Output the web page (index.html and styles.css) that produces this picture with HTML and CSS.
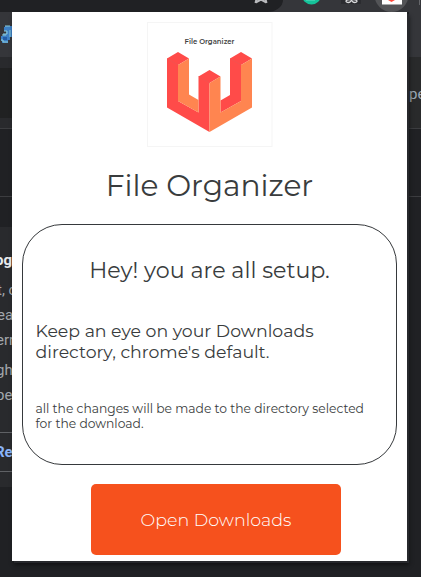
FILE: index.html
```html
<!DOCTYPE html>
<html lang="en">
<head>
<meta charset="utf-8">
<title>File Organizer</title>
<link rel="stylesheet" href="styles.css">
</head>
<body>
<div class="browser">
  <header class="toolbar">
    <div class="omnibox">
      <svg class="star" width="18" height="12" viewBox="0 0 18 12"><path d="M3.500 3 5-3M14.500 3 13-3M3.500 2.500 9-.5 14.500 2.500" fill="none" stroke="#b9babd" stroke-width="2"/></svg>
    </div>
    <svg class="tools" width="138" height="12" viewBox="283 0 138 12">
      <circle cx="311.500" cy="-5" r="9.500" fill="#15c39a"/>
      <path d="M306 0h9" stroke="#65dfc4" stroke-width="1"/>
      <path d="M341 0h20v4h-20z" fill="#2b2c30"/>
      <path d="M350-.5c-5 0-5 3-1.500 3 2 0 2-1 3-2.500 1 1.500 1 2.500 3 2.500 3.500 0 3.500-3-1.500-3" fill="none" stroke="#d7d8da" stroke-width="1.300"/>
      <circle cx="391.500" cy="-5" r="17" fill="#535457"/>
      <path d="M382 0h20v4.500h-20z" fill="#fff"/>
      <path d="M388 0h7l-3.500 2Z" fill="#ff4b3e"/>
      <path d="M419.500 0v5" stroke="#66676b"/>
    </svg>
  </header>
  <aside class="rail left">
    <div class="bookmarks"><svg width="12" height="20" viewBox="0 0 12 20"><path d="M5 1h7v11h-2v3H8v3H2v-2H1v-5h2V9h3V6H4V2h1Z" fill="#3d80c5"/><path d="M5 1h5M4 6h3v3H3M10 5v7M2 10h4M1 15h2v2h5" fill="none" stroke="#8dcbd6"/><path d="M3 12h4v3H3Z" fill="#235da6"/></svg></div>
    <div class="band"></div><div class="hero"></div><div class="strip"></div><div class="gap"></div><div class="gap-end"></div>
    <div class="panel">
      <b>og</b><span>t, c</span><span>ea</span><span class="wide">err</span><span class="wide para">gh</span><span class="wide">pe</span>
      <div class="link">Re</div>
    </div>
  </aside>
  <aside class="rail right">
    <div class="bookmarks"></div><div class="side">pe</div><div class="gap"></div>
  </aside>
</div>
<main class="popup">
  <svg class="logo" width="126" height="126" viewBox="147 22 126 126">
    <rect x="147.500" y="22.500" width="124.500" height="124" fill="#fff" stroke="#f5f5f5"/>
    <text x="184.500" y="44" textLength="50" lengthAdjust="spacingAndGlyphs">File Organizer</text>
    <path fill="#ff4b49" d="M167 58.500 178 52 189 58.500 178 65V101L198.500 112.500V76.500L209.500 70 220.500 76.500 209.500 83V132L167 107.500ZM230 58.500 241 52 252 58.500 241 65V101L220.500 112.500V100.500L230 95Z"/>
    <path fill="#ff8550" d="M178 65 189 58.500V94.500L198.500 100V112.500L178 101ZM209.500 83 220.500 76.500V112.500L241 101V65L252 58.500V107.500L209.500 132Z"/>
    <path d="M167 58.500 178 65M198.500 76.500 209.500 83M230 58.500 241 65" stroke="#ed5653" stroke-width=".6"/>
  </svg>
  <h1>File Organizer</h1>
  <section class="card">
    <h2>Hey! you are all setup.</h2>
    <p class="lead">Keep an eye on your Downloads<br>directory, chrome's default.</p>
    <p class="note">all the changes will be made to the directory selected<br>for the download.</p>
  </section>
  <button>Open Downloads</button>
</main>
</body>
</html>
```

FILE: styles.css
```css
* { box-sizing: border-box; }
body { margin: 0; overflow: hidden; background: #202124; font-family: Montserrat, Inter, sans-serif; }
.browser { width: 421px; height: 577px; display: grid; grid-template: 12px 565px / 12px 1fr 12px; background: #202124; }
.toolbar { grid-column: 1 / 4; display: flex; background: #35363a; overflow: hidden; }
.omnibox { width: 283px; height: 12px; background: #202124; border-bottom-right-radius: 16px 12px; }
.star { display: block; margin-left: 252px; }
.rail { overflow: hidden; }
.left { grid-column: 1; }
.right { grid-column: 3; }
.bookmarks { height: 45px; background: #35363a; }
.left .bookmarks { padding-top: 13px; }
.bookmarks svg { display: block; }
.band { height: 11px; background: #292a2d; }
.hero { height: 50px; background: #202122; }
.strip { height: 10px; background: #292a2d; }
.gap { height: 69px; border: solid #3c3d40; border-width: 1px 0; }
.gap-end { height: 30px; }
.panel { height: 260px; padding-top: 21px; background: #292a2d; color: #a2a6ab; font: 15px/25px Roboto, sans-serif; overflow: hidden; white-space: nowrap; }
.panel b, .panel span { display: block; margin-left: -3px; }
.panel b { height: 30px; margin-left: -5px; color: #e8eaed; }
.panel .wide { margin-left: -4px; }
.panel .para { margin-top: 5px; }
.panel .link { height: 40px; margin-top: 24px; padding-top: 7px; border: solid #5f6165; border-width: 1px 0; color: #8ab4f8; font-weight: 700; text-indent: -5px; }
.side { height: 71px; padding-top: 25px; background: #292a2b; color: #9aa8b5; font: 15px/24px Roboto, sans-serif; white-space: nowrap; }
.popup { position: absolute; left: 12px; top: 12px; width: 395px; height: 549px; padding: 10px 10px 0; display: flex; flex-direction: column; align-items: center; background: #fff; color: #393c3d; box-shadow: 2px 2px 0 #27282c, 2px 4px 4px #111214; }
.logo { display: block; flex: none; }
.logo text { font-size: 6.800px; font-weight: 600; fill: #3f3f3f; }
h1, h2, p { margin: 0; font-weight: 400; white-space: nowrap; }
h1 { flex: none; height: 76px; padding-top: 17px; font-size: 29.700px; line-height: 40px; }
.card { flex: none; width: 375px; height: 241px; padding: 32px 12.500px 0; border: 1px solid #36393c; border-radius: 40px; }
h2 { font-size: 22.200px; line-height: 28px; text-align: center; }
.lead { margin-top: 35px; font-size: 17.330px; line-height: 21px; }
.note { margin-top: 39px; font-size: 12.300px; line-height: 15px; }
button { flex: none; width: 250px; height: 71px; margin: 19px 0 0 13px; padding: 0; border: 0; border-radius: 5px; background: #f6511d; color: #fff; font: 300 17.500px/22px Montserrat, Inter, sans-serif; }
```
